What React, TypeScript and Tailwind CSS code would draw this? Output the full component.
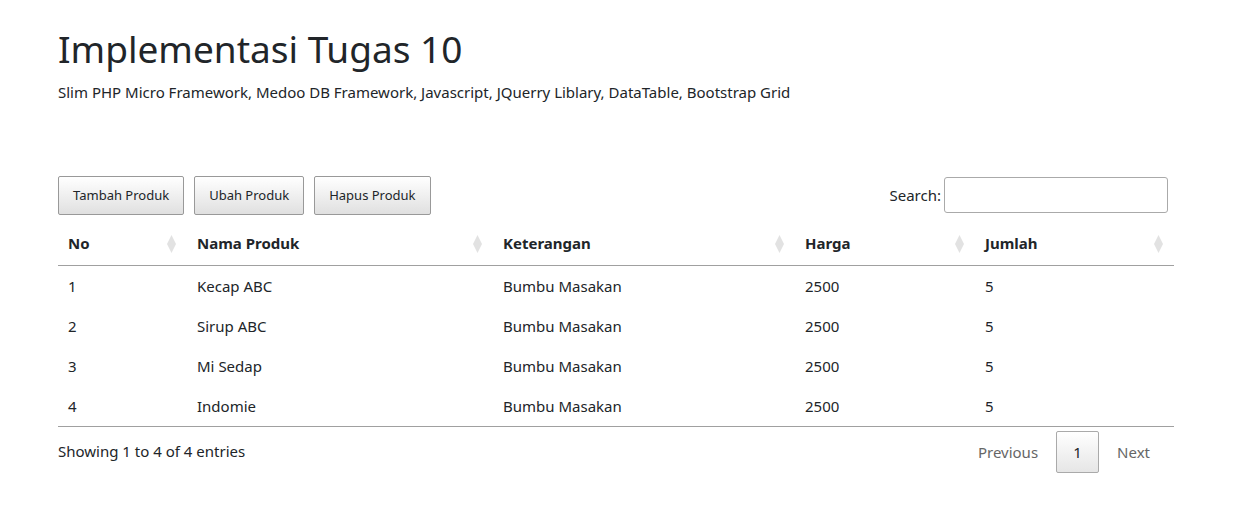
import React from "react";

const rows = [
  { no: 1, nama: "Kecap ABC", ket: "Bumbu Masakan", harga: 2500, jumlah: 5 },
  { no: 2, nama: "Sirup ABC", ket: "Bumbu Masakan", harga: 2500, jumlah: 5 },
  { no: 3, nama: "Mi Sedap", ket: "Bumbu Masakan", harga: 2500, jumlah: 5 },
  { no: 4, nama: "Indomie", ket: "Bumbu Masakan", harga: 2500, jumlah: 5 },
];

const cols = [
  { label: "No", w: "w-[129px]" },
  { label: "Nama Produk", w: "w-[306px]" },
  { label: "Keterangan", w: "w-[302px]" },
  { label: "Harga", w: "w-[180px]" },
  { label: "Jumlah", w: "w-[199px]" },
];

function SortIcon() {
  return (
    <svg width="9" height="18" viewBox="0 0 9 18" className="absolute right-[11px] top-[13px]">
      <path d="M4.5 0 L9 9 L4.5 18 L0 9 Z" fill="#e2e2e2" />
    </svg>
  );
}

function DtButton({ children }: { children: React.ReactNode }) {
  return (
    <button className="h-[39px] px-[14px] text-[13px] text-[#212529] border border-[#999] rounded-[2px] bg-gradient-to-b from-white to-[#e0e0e0]">
      {children}
    </button>
  );
}

export default function App() {
  return (
    <div className="min-h-[516px] bg-white text-[#212529] font-['Noto_Sans',sans-serif] px-[58px]">
      <div className="pt-[27px]">
        <h1 className="text-[37px] font-normal leading-[1.2]">Implementasi Tugas 10</h1>
        <p className="text-[15px] mt-[10px]">
          Slim PHP Micro Framework, Medoo DB Framework, Javascript, JQuerry Liblary, DataTable, Bootstrap Grid
        </p>
      </div>

      <div className="w-[1116px] mt-[72px]">
        <div className="flex items-center justify-between">
          <div className="flex gap-[10px]">
            <DtButton>Tambah Produk</DtButton>
            <DtButton>Ubah Produk</DtButton>
            <DtButton>Hapus Produk</DtButton>
          </div>
          <label className="flex items-center gap-[3px] text-[15px] mr-[6px]">
            Search:
            <input className="w-[224px] h-[36px] border border-[#aaa] rounded-[3px] px-[5px] outline-none" />
          </label>
        </div>

        <table className="w-full mt-[7px] border-collapse text-[15px]">
          <thead>
            <tr className="border-b border-[#a0a0a0]">
              {cols.map((c) => (
                <th key={c.label} className={`${c.w} relative text-left font-bold pl-[10px] pr-[18px] py-[10px] h-[44px]`}>
                  {c.label}
                  <SortIcon />
                </th>
              ))}
            </tr>
          </thead>
          <tbody>
            {rows.map((r) => (
              <tr key={r.no} className="h-[40px]">
                <td className="pl-[10px] pt-[1px]">{r.no}</td>
                <td className="pl-[10px] pt-[1px]">{r.nama}</td>
                <td className="pl-[10px] pt-[1px]">{r.ket}</td>
                <td className="pl-[10px] pt-[1px]">{r.harga}</td>
                <td className="pl-[10px] pt-[1px]">{r.jumlah}</td>
              </tr>
            ))}
          </tbody>
        </table>
        <div className="border-t border-[#a0a0a0] flex justify-between items-start">
          <div className="text-[15px] pt-[13px]">Showing 1 to 4 of 4 entries</div>
          <div className="flex items-center pt-[4px] text-[15px] mr-[8px]">
            <span className="px-[16px] text-[#666]">Previous</span>
            <span className="w-[43px] h-[42px] flex items-center justify-center border border-[#aaa] rounded-[2px] bg-gradient-to-b from-white to-[#e6e6e6] mx-[2px]">1</span>
            <span className="px-[16px] text-[#666]">Next</span>
          </div>
        </div>
      </div>
    </div>
  );
}
